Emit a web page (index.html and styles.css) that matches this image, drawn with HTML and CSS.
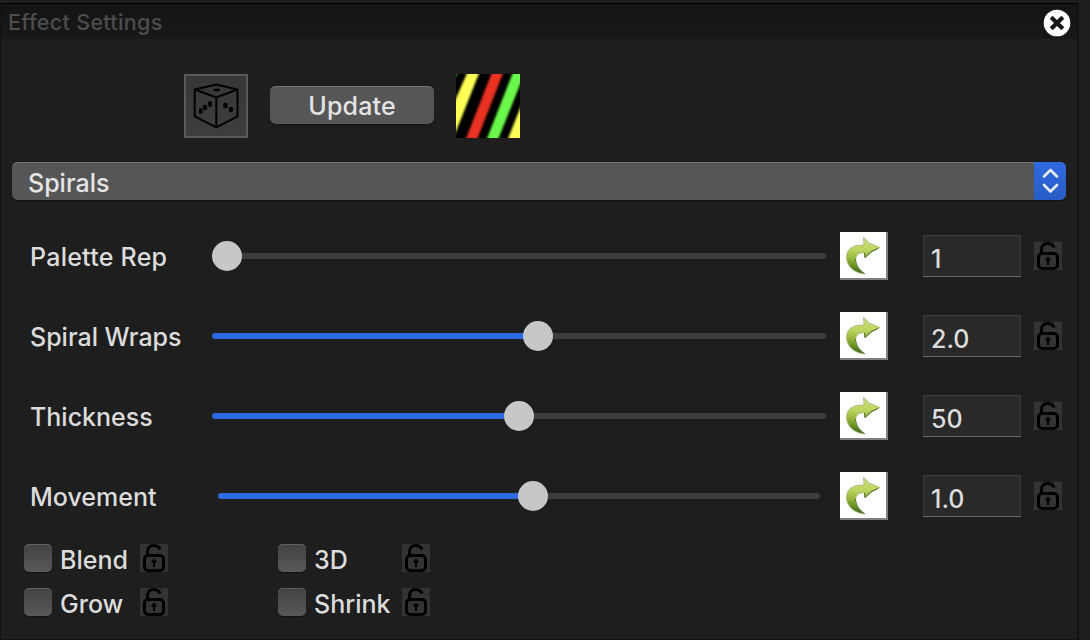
FILE: index.html
```
<!DOCTYPE html>
<html lang="en">
<head>
<meta charset="utf-8">
<title>Effect Settings</title>
<link rel="stylesheet" href="styles.css">
</head>
<body>
<svg class="defs" aria-hidden="true">
  <defs>
    <linearGradient id="leaf" x1="0" y1="0" x2="0" y2="1">
      <stop offset="0" stop-color="#cbdf80"/><stop offset=".35" stop-color="#bdd65f"/><stop offset=".6" stop-color="#93b53c"/><stop offset="1" stop-color="#2f6508"/>
    </linearGradient>
    <filter id="soften" x="-5%" y="-5%" width="110%" height="110%"><feGaussianBlur stdDeviation="1"/></filter>
    <symbol id="lock" viewBox="0 0 28 28">
      <path d="M7.500 11V7.500C7.500 3.800 10 1.500 13.500 1.500c3.400 0 5.500 1.300 6.700 4" fill="none" stroke="#000" stroke-width="3"/>
      <rect x="4.500" y="11.500" width="19" height="15" rx="3.500" fill="none" stroke="#000" stroke-width="3"/>
      <path d="M14 14.500l3 3.300-2 1.500V23h-2v-3.700l-2-1.500z"/>
    </symbol>
    <symbol id="arrow" viewBox="0 0 48 48">
      <path d="M25 42C13 41 6.500 33 6.500 25.500 6.500 17 13 12.500 24 13L23.500 5 29 11 40 15.500 32 20 25 26 24.500 21C18 20 15.500 24 15.500 29c.5 5 4 9.500 9.500 13z" fill="url(#leaf)" stroke="#a3b07c" stroke-width=".8"/>
      <path d="M38 16.500L31 19.500 25 25.500 24.500 21M15.500 27c.5 7 4 11 9 14.500" fill="none" stroke="#526b35" stroke-width="1"/>
    </symbol>
  </defs>
</svg>
<main class="panel">
  <header class="titlebar">
    <h1 class="title">Effect Settings</h1>
    <svg class="close" viewBox="0 0 28 28"><circle cx="14" cy="14" r="13.300" fill="#fff"/><path d="M8.200 8.200l11.600 11.600M19.800 8.200L8.200 19.800" stroke="#171717" stroke-width="4.200"/></svg>
  </header>
  <div class="toolbar">
    <svg class="dice" viewBox="0 0 64 64">
      <g fill="none" stroke="#000" stroke-width="2"><path d="M10.700 15.500L32.300 10.500 53.500 15.500V42.500L32.300 53.500 10.700 42.500z"/><path d="M10.700 15.500L32.300 23.500 53.500 15.500M32.300 23.500v30"/></g>
      <ellipse cx="32.700" cy="16" rx="3.300" ry="1.400"/><ellipse cx="26" cy="30" rx="2" ry="2.900"/><ellipse cx="21" cy="33.500" rx="2.200" ry="2.700"/><ellipse cx="16.700" cy="37" rx="2" ry="2.900"/><ellipse cx="41.500" cy="31.500" rx="2.300" ry="2.700"/><ellipse cx="47" cy="35.500" rx="2.200" ry="2.700"/>
      <rect x="1" y="1" width="62" height="62" fill="none" stroke="#5a5a5a" stroke-width="2"/>
    </svg>
    <button class="update">Update</button>
    <svg class="preview" viewBox="0 0 64 64">
      <rect width="64" height="64"/>
      <g filter="url(#soften)">
        <path d="M-3-3H2.500L-3 8z" fill="#32c83c"/>
        <path d="M12-3H24L-3 65V31z" fill="#ffff54"/>
        <path d="M36.500-3H48L20.500 67H9z" fill="#ea3323"/>
        <path d="M57.500-3H69.500L41.500 67H30z" fill="#6af94c"/>
        <path d="M51 67L67 27V67z" fill="#ffff54"/>
      </g>
    </svg>
  </div>
  <div class="select">
    <span class="select-value">Spirals</span>
    <span class="stepper"><svg class="chevrons" viewBox="0 0 32 38"><path d="M10 14.500l6.500-6.500 6.500 6.500M10 23l6.500 6.500L23 23" fill="none" stroke="#e6ecfa" stroke-width="2.600" stroke-linecap="round" stroke-linejoin="round"/></svg></span>
  </div>
  <section class="settings">
    <div class="row">
      <span class="label palette">Palette Rep</span>
      <div class="slider"><span class="track"></span><span class="knob"></span><span class="track grow"></span></div>
      <svg class="reset"><use href="#arrow" width="48" height="48"/></svg><div class="field">1</div><svg class="lock"><use href="#lock"/></svg>
    </div>
    <div class="row">
      <span class="label">Spiral Wraps</span>
      <div class="slider"><span class="track filled" style="width:311px"></span><span class="knob"></span><span class="track grow"></span></div>
      <svg class="reset"><use href="#arrow" width="48" height="48"/></svg><div class="field">2.0</div><svg class="lock"><use href="#lock"/></svg>
    </div>
    <div class="row">
      <span class="label">Thickness</span>
      <div class="slider"><span class="track filled" style="width:292px"></span><span class="knob"></span><span class="track grow"></span></div>
      <svg class="reset"><use href="#arrow" width="48" height="48"/></svg><div class="field">50</div><svg class="lock"><use href="#lock"/></svg>
    </div>
    <div class="row">
      <span class="label">Movement</span>
      <div class="slider inset"><span class="track filled" style="width:300px"></span><span class="knob"></span><span class="track grow"></span></div>
      <svg class="reset"><use href="#arrow" width="48" height="48"/></svg><div class="field">1.0</div><svg class="lock"><use href="#lock"/></svg>
    </div>
  </section>
  <section class="options">
    <span class="box"></span><span class="option">Blend</span><svg class="lock"><use href="#lock"/></svg>
    <span class="box"></span><span class="option">3D</span><svg class="lock"><use href="#lock"/></svg>
    <span class="box"></span><span class="option">Grow</span><svg class="lock"><use href="#lock"/></svg>
    <span class="box"></span><span class="option">Shrink</span><svg class="lock"><use href="#lock"/></svg>
  </section>
</main>
</body>
</html>
```
FILE: styles.css
```
* { box-sizing: border-box; }
body {
  margin: 0;
  height: 640px;
  padding-top: 3px;
  overflow: hidden;
  background: #1e1e1e;
  color: #dcdcdc;
  font: 500 25px/30px Inter, "Liberation Sans", sans-serif;
}
.defs { position: absolute; width: 0; height: 0; }
svg { display: block; flex: none; }
.panel {
  width: 1079px;
  height: 637px;
  border: solid #121212;
  border-width: 1px 2px 1px 1px;
  border-top-color: #000;
}
.titlebar {
  display: flex;
  justify-content: space-between;
  height: 35px;
  padding: 4px 6px 0 7px;
  background: linear-gradient(#141414, #181818);
}
.title {
  margin: 0;
  font-size: 21.5px;
  line-height: 29px;
  font-weight: 500;
  letter-spacing: .32px;
  color: #4d4d4d;
}
.close { width: 28px; height: 28px; margin-top: 1px; }
.toolbar { display: flex; align-items: center; height: 123px; padding: 11px 0 0 183px; }
.dice { width: 64px; height: 64px; background: linear-gradient(#363636, #3e3e3e); margin-right: 22px; }
.update {
  width: 164px;
  height: 38px;
  margin: 0 22px 2px 0;
  padding: 2px 0 0;
  border: 0;
  border-radius: 6px;
  background: #565656;
  box-shadow: inset 0 1px #747474, 0 1px 1px #111;
  color: #e4e4e4;
  font: inherit;
  letter-spacing: .15px;
}
.preview { width: 64px; height: 64px; overflow: hidden; }
.select {
  display: flex;
  width: 1054px;
  height: 38px;
  margin: 0 0 16px 11px;
  border-radius: 6px;
  overflow: hidden;
  background: #565656;
  box-shadow: inset 0 1px #747474, 0 1px 1px #111;
}
.select-value { flex: 1; padding-left: 16px; line-height: 43px; color: #e4e4e4; }
.stepper { width: 32px; background: linear-gradient(#306ae0, #285bc5); }
.chevrons { width: 32px; height: 38px; }
.row { display: flex; align-items: center; height: 80px; padding-left: 29px; }
.label { width: 182px; flex: none; white-space: nowrap; padding-top: 2px; }
.palette { letter-spacing: .25px; }
.slider { display: flex; align-items: center; width: 614px; margin-right: 14px; }
.slider.inset { padding: 0 6px; }
.track { height: 6px; background: #3d3d3d; }
.track.filled { background: #2f69df; border-radius: 3px 0 0 3px; box-shadow: 2px 0 #2f69df; }
.track.grow { flex: 1; border-radius: 0 3px 3px 0; box-shadow: -2px 0 #3d3d3d; }
.knob { position: relative; width: 30px; height: 30px; border-radius: 50%; background: #c7c7c7; z-index: 1; }
.reset { width: 48px; height: 48px; background: #fff; box-shadow: inset -2px -2px #808080; margin-right: 35px; }
.field {
  width: 98px;
  height: 42px;
  padding: 8px 7px 0;
  margin-right: 13px;
  background: #292929;
  border: 1px solid #3c3c3c;
  border-bottom-color: #686868;
}
.lock { width: 28px; height: 28px; background: #333; }
.options {
  display: grid;
  grid-template-columns: 36px 80px 138px 36px 88px 28px;
  grid-auto-rows: 44px;
  align-items: center;
  padding-left: 23px;
}
.box { width: 28px; height: 28px; border-radius: 5px; background: linear-gradient(#424242, #595959); box-shadow: inset 0 1px #616161, 0 1px 1px #111; }
.option { padding-top: 3px; }
```
